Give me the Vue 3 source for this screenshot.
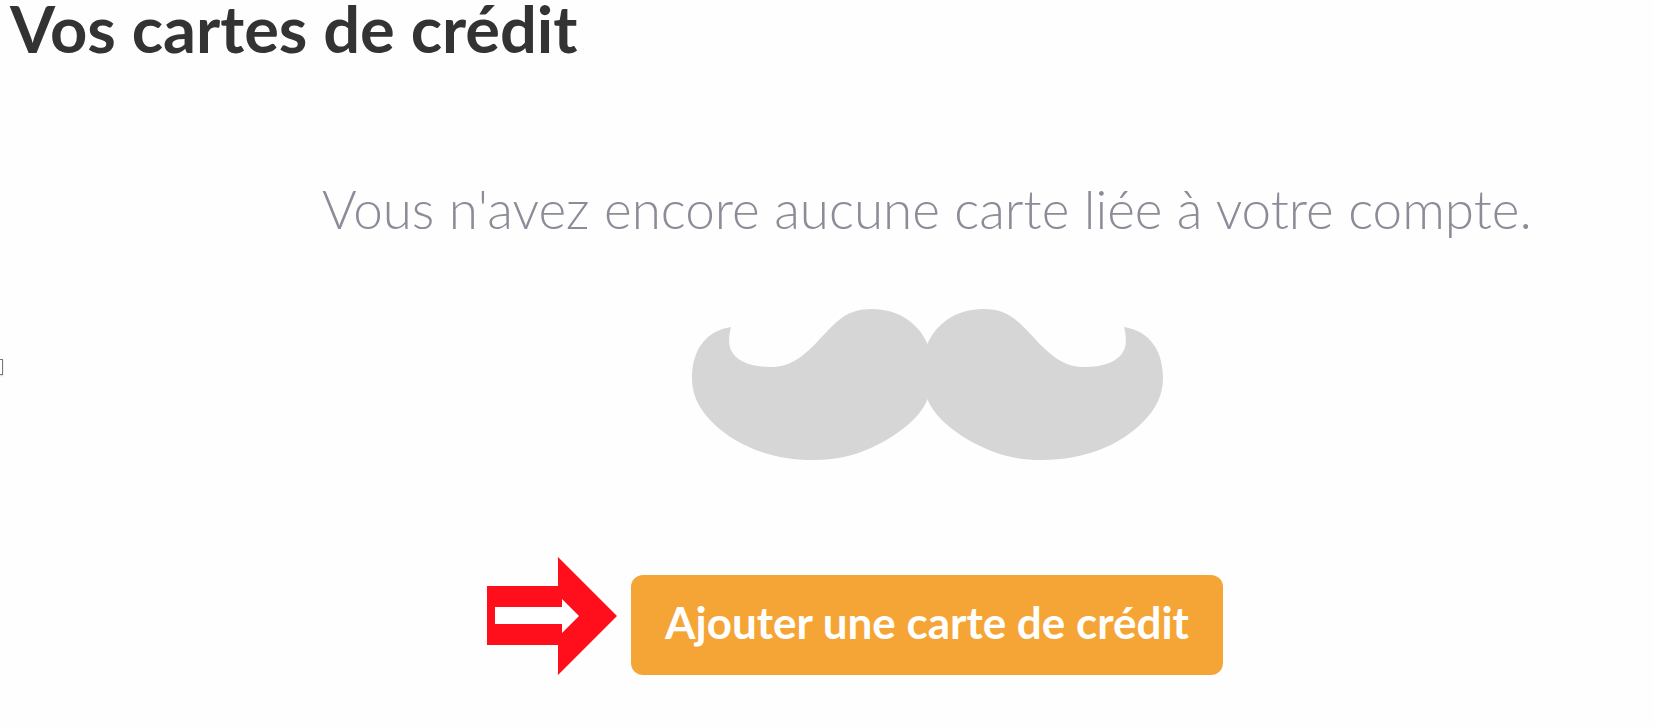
<script setup>
const title = 'Vos cartes de crédit'
const emptyMessage = "Vous n'avez encore aucune carte liée à votre compte."
const addLabel = 'Ajouter une carte de crédit'
</script>

<template>
  <main class="page">
    <h1 class="title">{{ title }}</h1>
    <span class="handle" aria-hidden="true"></span>
    <section class="empty">
      <p class="message">{{ emptyMessage }}</p>
      <svg class="moustache" viewBox="0 0 471 151" aria-hidden="true">
        <defs>
          <path
            id="moustache-half"
            d="M39 18C37 26 36 35 39 41C44 52 58 58 79 58C98 58 111 48 126 32C145 12 154 0 180 0C206 0 227 14 236 36V89C229 108 209 123 189 134C166 146 147 151 121 151C78 151 43 136 20 113C7 100 0 86 0 69C0 42 13 22 39 18Z"
          />
        </defs>
        <use href="#moustache-half" />
        <use href="#moustache-half" transform="matrix(-1 0 0 1 471 0)" />
      </svg>
      <div class="action">
        <svg class="arrow" viewBox="0 0 130 118" aria-hidden="true">
          <path fill="#ff0f1b" d="M0 29H71V0L130 59L71 118V88H0Z" />
          <path fill="#fff" d="M8 50H75V42L92 59L75 76V67H8Z" />
        </svg>
        <button class="add" type="button">{{ addLabel }}</button>
      </div>
    </section>
  </main>
</template>

<style>
body {
  margin: 0;
  background: #fefefe;
}
</style>

<style scoped>
.page {
  position: relative;
  font-family: Lato, "Open Sans", sans-serif;
}

.title {
  margin: 0;
  padding: 0 10px;
  color: #333;
  font-size: 65px;
  font-weight: 700;
  line-height: 56px;
}

.handle {
  position: absolute;
  top: 359px;
  left: 0;
  box-sizing: border-box;
  width: 3px;
  height: 16px;
  border: 1px solid #777;
  border-left: 0;
  box-shadow: 0 1px 2px #ccc;
}

.empty {
  display: flex;
  flex-direction: column;
  align-items: center;
  padding: 123px 0 52px 200px;
}

.message {
  margin: 0;
  color: #8c8c98;
  font-size: 53px;
  font-weight: 300;
  line-height: 60px;
  text-align: center;
}

.moustache {
  width: 471px;
  height: 151px;
  margin-top: 70px;
  fill: #d6d6d6;
}

.action {
  position: relative;
  margin-top: 115px;
}

.arrow {
  position: absolute;
  right: calc(100% + 14px);
  top: -18px;
  width: 130px;
  height: 118px;
}

.add {
  display: block;
  padding: 17px 34px 23px;
  border: 0;
  border-radius: 12px;
  background: #f5a536;
  color: #fff;
  font-family: inherit;
  font-size: 44px;
  font-weight: 700;
  line-height: 60px;
  cursor: pointer;
}
</style>
